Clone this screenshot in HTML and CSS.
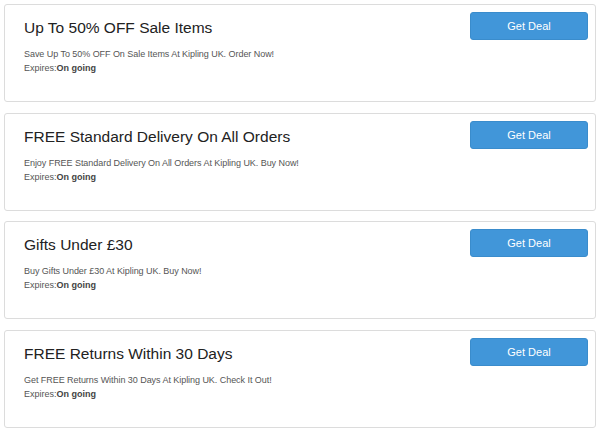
FILE: index.html
```html
<!DOCTYPE html>
<html>
<head>
<meta charset="utf-8">
<link rel="stylesheet" href="styles.css">
</head>
<body>
<div class="list">
  <div class="card">
    <div class="info">
      <h2 class="title">Up To 50% OFF Sale Items</h2>
      <p class="desc">Save Up To 50% OFF On Sale Items At Kipling UK. Order Now!</p>
      <p class="exp">Expires:<b>On going</b></p>
    </div>
    <a class="btn">Get Deal</a>
  </div>
  <div class="card">
    <div class="info">
      <h2 class="title">FREE Standard Delivery On All Orders</h2>
      <p class="desc">Enjoy FREE Standard Delivery On All Orders At Kipling UK. Buy Now!</p>
      <p class="exp">Expires:<b>On going</b></p>
    </div>
    <a class="btn">Get Deal</a>
  </div>
  <div class="card">
    <div class="info">
      <h2 class="title">Gifts Under £30</h2>
      <p class="desc">Buy Gifts Under £30 At Kipling UK. Buy Now!</p>
      <p class="exp">Expires:<b>On going</b></p>
    </div>
    <a class="btn">Get Deal</a>
  </div>
  <div class="card">
    <div class="info">
      <h2 class="title">FREE Returns Within 30 Days</h2>
      <p class="desc">Get FREE Returns Within 30 Days At Kipling UK. Check It Out!</p>
      <p class="exp">Expires:<b>On going</b></p>
    </div>
    <a class="btn">Get Deal</a>
  </div>
</div>
</body>
</html>
```
FILE: styles.css
```css
html, body {
  margin: 0;
  padding: 0;
  background: #fff;
  font-family: "Liberation Sans", Arial, sans-serif;
}
.list {
  display: flex;
  flex-direction: column;
  gap: 10.6px;
  padding: 4px 4px 0 4px;
}
.card {
  display: flex;
  justify-content: space-between;
  align-items: flex-start;
  height: 98px;
  box-sizing: border-box;
  border: 1px solid #dcdcdc;
  border-radius: 3px;
  padding: 7px 7px 0 19px;
}
.info {
  padding-top: 6px;
}
.title {
  margin: 0;
  font-size: 15.5px;
  line-height: 20px;
  font-weight: normal;
  color: #222;
}
.desc {
  margin: 9px 0 0 0;
  font-size: 9px;
  line-height: 14px;
  color: #555;
  letter-spacing: -0.05px;
}
.exp {
  margin: 0;
  font-size: 9px;
  line-height: 14px;
  color: #555;
}
.exp b {
  color: #444;
}
.btn {
  display: flex;
  align-items: center;
  justify-content: center;
  width: 118px;
  height: 28px;
  box-sizing: border-box;
  background: #4196d9;
  border: 1px solid #3a8ccc;
  border-radius: 3px;
  color: #fff;
  font-size: 11px;
}
```
